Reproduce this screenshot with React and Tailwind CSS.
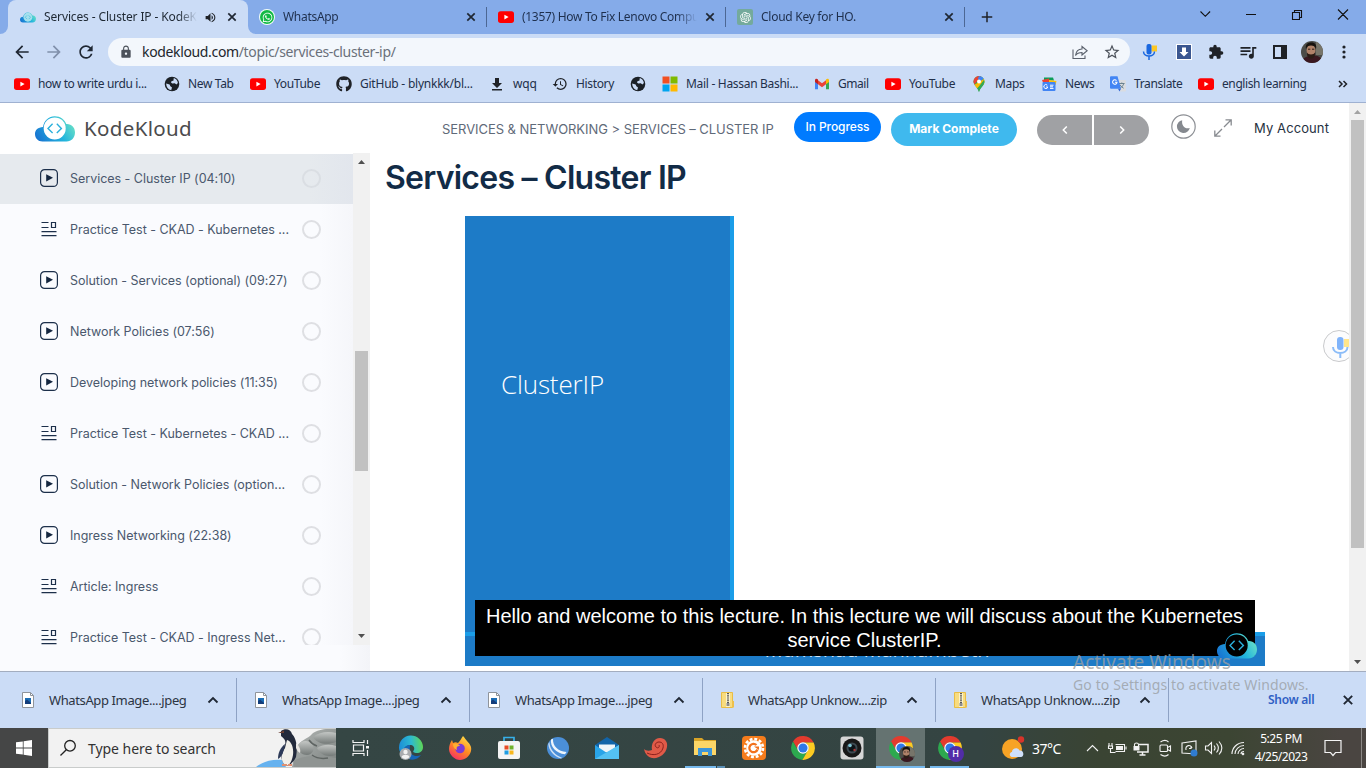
import React from "react";
import { FaGithub, FaWhatsapp } from "react-icons/fa";
import { RiOpenaiFill } from "react-icons/ri";
import {
  MdArrowBack, MdArrowForward, MdRefresh, MdLock, MdStarBorder, MdExtension,
  MdQueueMusic, MdHistory, MdVolumeUp, MdAdd,
} from "react-icons/md";

const CLOUD = "M7.500 25.500 C3 25.500 0 22.300 0 18 C0 13.800 3 11.200 8 10.900 C9 4.500 13.800 0.200 19.700 0.200 C25.500 0.200 29.800 3.600 31.300 8 C36.500 7.600 40 11.500 40 16.300 C40 21.800 36.500 25.500 31.500 25.500 Z";

function CloudLogo({ className, inner, id }) {
  return (
    <svg viewBox="0 0 40 26" className={className}>
      <defs>
        <linearGradient id={id} x1="0" y1="0.7" x2="1" y2="0.3">
          <stop offset="0" stopColor="#1977d2" />
          <stop offset="0.55" stopColor="#22b5dd" />
          <stop offset="1" stopColor="#6fe3c4" />
        </linearGradient>
      </defs>
      <path d={CLOUD} fill={`url(#${id})`} />
      <circle cx="19.7" cy="12.4" r="11" fill={inner} />
      <path d="M17.600 7.800 L13 12.400 L17.600 17 M21.800 7.800 L26.400 12.400 L21.800 17" fill="none" stroke="#2bb0dc" strokeWidth="1.400" />
    </svg>
  );
}

const YouTube = () => (
  <svg viewBox="0 0 16 16" className="size-4 shrink-0">
    <rect x="0" y="2.3" width="16" height="11.6" rx="2.6" fill="#f00" />
    <path d="M6.4 5.7 L10.6 8.1 L6.4 10.5Z" fill="#fff" />
  </svg>
);

const Globe = () => (
  <svg viewBox="0 0 16 16" className="size-4 shrink-0">
    <circle cx="8" cy="8" r="7.300" fill="#1b2026" />
    <path d="M2.200 7.600 5.600 8.400 6.400 10.200 8 11.400 7.200 14.200C4.300 13.800 2.200 11.200 2.200 7.600zM9.800 2.100C12 2.700 13.600 4.700 13.900 7L12.400 8.400 10.800 7.200 8.200 7.400 6.900 6.300 7.800 4.900 9.400 4.700z" fill="#cbdcf6" />
  </svg>
);

const Microsoft = () => (
  <svg viewBox="0 0 16 16" className="size-4 shrink-0">
    <path d="M.5.5h7v7h-7z" fill="#f25022" /><path d="M8.5.5h7v7h-7z" fill="#7fba00" />
    <path d="M.5 8.5h7v7h-7z" fill="#00a4ef" /><path d="M8.5 8.5h7v7h-7z" fill="#ffb900" />
  </svg>
);

const Gmail = () => (
  <svg viewBox="0 0 16 16" className="size-4 shrink-0">
    <path d="M1 4v9.2h3V6.5z" fill="#4285f4" /><path d="M15 4v9.2h-3V6.5z" fill="#34a853" />
    <path d="M4 4.2 8 7.3l4-3.1v4L8 11.2 4 8.2z" fill="#ea4335" />
    <path d="M1 4.2C1 2.8 2.6 2.2 4 3.4v4.8L1 6z" fill="#c5221f" /><path d="M15 4.2c0-1.4-1.600-2-3-.8v4.800L15 6z" fill="#fbbc04" />
  </svg>
);

const MapsPin = () => (
  <svg viewBox="0 0 16 16" className="size-4 shrink-0">
    <path d="M8 0a5.500 5.500 0 0 1 5.500 5.600C13.500 9.500 9.500 11 8 16 6.500 11 2.500 9.500 2.500 5.600A5.500 5.500 0 0 1 8 0z" fill="#34a853" />
    <path d="M2.500 5.600A5.500 5.500 0 0 1 8 0l2 .4-6.500 8.200A6 6 0 0 1 2.500 5.600z" fill="#ea4335" />
    <path d="M8 0a5.500 5.500 0 0 1 4.600 2.600L9.500 6 7 2.700z" fill="#4285f4" />
    <path d="M3.500 8.700 12.800 3c1 2 .8 4-.4 5.700L6 12.300z" fill="#fbbc04" />
    <path d="M6.300 12.500 12.900 4c1 2.500.2 4.300-1.500 6.200C9.500 12.200 8.800 13.500 8 16c-.4-1.500-1-2.500-1.700-3.500z" fill="#34a853" />
    <circle cx="8" cy="5.500" r="2" fill="#fff" />
  </svg>
);

const News = () => (
  <svg viewBox="0 0 16 16" className="size-4 shrink-0">
    <path d="M3 1.500h9l1 3H3z" fill="#0c9d58" /><path d="M1 4l7-1.500.8 4H2z" fill="#ea4335" />
    <path d="M8 4 15.500 5l-1 4H8z" fill="#ffc107" />
    <rect x="1.500" y="6" width="13" height="9" rx="1" fill="#4285f4" />
    <path d="M6.300 9.200A2 2 0 1 0 6.800 11H5M9 9.200h3.500M9 10.800h3M9 12.400h3.500" stroke="#fff" strokeWidth="1" fill="none" />
  </svg>
);

const Translate = () => (
  <svg viewBox="0 0 16 16" className="size-4 shrink-0">
    <path d="M6 4h9a1 1 0 0 1 1 1v9.500a1 1 0 0 1-1 1H10z" fill="#dadce0" />
    <path d="M9 7.500h5.500M11.800 6.500v1M13.800 7.500c-.6 2-1.800 3.500-3.500 4.500M10 8.800c.8 1.500 2 2.600 3.600 3.400" stroke="#607988" strokeWidth=".9" fill="none" />
    <path d="M1 .3h6.500L11 12.800H1a1 1 0 0 1-1-1V1.300a1 1 0 0 1 1-1z" fill="#4285f4" />
    <path d="M6.500 4.600A2.200 2.200 0 1 0 7 6.300H4.900" stroke="#fff" strokeWidth="1.100" fill="none" />
    <path d="M8 12.800h3l-1.500 2.700z" fill="#3367d6" />
  </svg>
);

const SaveIcon = () => (
  <svg viewBox="0 0 16 16" className="size-4 shrink-0">
    <path d="M6 2h4v5h3l-5 5-5-5h3zM3 13h10v1.500H3z" fill="#1f2227" />
  </svg>
);

const Close = ({ className = "size-4" }) => (
  <svg viewBox="0 0 16 16" className={className}>
    <path d="M4.300 4.300l7.400 7.400M11.700 4.300l-7.400 7.400" stroke="#1f2733" strokeWidth="1.700" />
  </svg>
);

const Chrome = ({ className }) => (
  <svg viewBox="0 0 24 24" className={className}>
    <path d="M2.770 6.010A11 11 0 0 1 21.800 7H12A5 5 0 0 0 7.670 14.500Z" fill="#e33b2e" />
    <path d="M2.770 6.010L7.670 14.500A5 5 0 0 0 16.330 14.500L11.430 22.980A11 11 0 0 1 2.770 6.010Z" fill="#2da94f" />
    <path d="M21.800 7A11 11 0 0 1 11.430 22.980L16.330 14.500A5 5 0 0 0 12 7Z" fill="#fdcb22" />
    <circle cx="12" cy="12" r="5.300" fill="#fff" />
    <circle cx="12" cy="12" r="4.200" fill="#2f78e8" />
  </svg>
);

const Face = ({ className }) => (
  <svg viewBox="0 0 22 22" className={className}>
    <defs><clipPath id="face"><circle cx="11" cy="11" r="11" /></clipPath></defs>
    <g clipPath="url(#face)">
      <path d="M0 0h22v22H0z" fill="#4b4c48" />
      <path d="M15 0h7v14h-7z" fill="#77756a" />
      <path d="M1 22c0-5 4-7 9-7 6-2 11 1 12 7z" fill="#3a1820" />
      <ellipse cx="10" cy="9.500" rx="4.400" ry="5.800" fill="#b08269" />
      <path d="M5 8C4 3 7 1.500 10.500 1.500S16 4 15 8c-1-2.500-2-3.500-5-3.500S6 5.500 5 8z" fill="#17130f" />
      <path d="M6 11.500c1 2.500 7 2.500 8 0 .3 4-1.500 6-4 6s-4.300-2-4-6z" fill="#2b1c15" />
      <path d="M7 8.200h2.300M11 8.200h2.300" stroke="#2b1c15" />
    </g>
  </svg>
);

/* ---------- browser chrome ---------- */

function TabRest({ icon, title, titleClass }) {
  return (
    <div className="flex h-[34px] w-[239px] items-center">
      <div className="w-[11px]" />
      {icon}
      <div className={"ml-2 w-[175px] overflow-hidden whitespace-nowrap text-[12px] text-[#1e2f4d] [mask-image:linear-gradient(to_right,black_88%,transparent)] " + titleClass}>{title}</div>
      <Close className="ml-[5px] size-4" />
      <div className="flex-1" />
      <div className="h-5 w-px bg-[#4c6794]" />
    </div>
  );
}

function TabStrip() {
  return (
    <div className="flex h-[34px] bg-[#cbdcf6]">
      <div className="w-2 rounded-br-lg bg-[#85abe9]" />
      <div className="w-[240px] bg-[#85abe9]">
        <div className="flex h-[34px] items-center rounded-t-lg bg-[#cbdcf6] pl-3">
          <CloudLogo className="h-[11px] w-4" inner="#a5e0ec" id="tabCloud" />
          <div className="ml-2 w-[153px] overflow-hidden whitespace-nowrap text-[12px] tracking-[-0.130px] text-[#1e2833] [mask-image:linear-gradient(to_right,black_88%,transparent)]">Services - Cluster IP - KodeKloud</div>
          <MdVolumeUp className="ml-[7px] size-[13px] text-[#1f2227]" />
          <Close className="ml-[7px] size-4" />
        </div>
      </div>
      <div className="flex flex-1 items-center rounded-bl-lg bg-[#85abe9]">
        <TabRest title="WhatsApp" titleClass="tracking-[-0.300px]" icon={
          <div className="flex size-4 items-center justify-center rounded-full bg-[#f3fff6]"><div className="flex size-[14px] items-center justify-center rounded-full bg-[#12b944]"><FaWhatsapp className="size-[11px] text-white" /></div></div>} />
        <TabRest title="(1357) How To Fix Lenovo Computer" titleClass="tracking-[-0.300px]" icon={<YouTube />} />
        <TabRest title="Cloud Key for HO." titleClass="tracking-[-0.270px]" icon={
          <div className="flex size-4 items-center justify-center rounded-[2px] bg-[#74aa9c]"><RiOpenaiFill className="size-[13px] text-white" /></div>} />
        <MdAdd className="ml-[13px] size-[18px] text-[#1f2227]" />
        <div className="flex-1" />
        <div className="flex h-[34px] w-[184px] items-start pt-[6px] text-black">
          <svg viewBox="0 0 184 16" className="h-4 w-[184px]" fill="none" stroke="#111" strokeWidth="1.100">
            <path d="M18.500 5.500l4.800 4.800 4.800-4.800M64 8.500h10M110.500 6.500h7v7h-7zM112.500 6.500v-2h7v7h-2M156 3.500l10 10M166 3.500l-10 10" />
          </svg>
        </div>
      </div>
    </div>
  );
}

function Toolbar() {
  return (
    <div className="flex h-[34px] items-center bg-[#cbdcf6] pt-px">
      <MdArrowBack className="ml-3 size-5 text-[#1f2733]" />
      <MdArrowForward className="ml-3 size-5 text-[#8090ab]" />
      <MdRefresh className="ml-[12px] size-5 text-[#1f2733]" />
      <div className="ml-3 flex h-7 w-[1022px] items-center rounded-full bg-[#f3f7fc] text-[14px] text-[#6a707a]">
        <MdLock className="ml-[11px] size-[14px] text-[#4c525b]" />
        <div className="ml-[9px] flex-1 whitespace-nowrap tracking-[-0.350px]"><span className="text-[#22262c]">kodekloud.com</span>/topic/services-cluster-ip/</div>
        <svg viewBox="0 0 16 16" className="mr-[15px] size-4" fill="none" stroke="#5a616c" strokeWidth="1.100">
          <path d="M1 5.500v9h12v-3M10 2.500 15.200 6.700 10 11V8.500C7 8.500 5 9.300 3.500 11.500 4 7.500 6 5 10 5z" />
        </svg>
        <MdStarBorder className="mr-[9px] size-[18px] text-[#4c525b]" />
      </div>
      <MicMark className="ml-3 h-4 w-4" />
      <svg viewBox="0 0 16 16" className="ml-[18px] size-4"><path d="M0 0h16v16H0z" fill="#fff" /><path d="M1 1h14v14H1z" fill="#3a5690" /><path d="M6 3.500h4V8h2.500L8 12.500 3.500 8H6z" fill="#fff" /></svg>
      <MdExtension className="ml-4 size-4 text-[#1f2227]" />
      <MdQueueMusic className="ml-[14px] size-5 text-[#1f2227]" />
      <svg viewBox="0 0 16 16" className="ml-[14px] size-4"><path d="M2 2h12v12H2z" fill="none" stroke="#1f2227" strokeWidth="2" /><path d="M9 2h5v12H9z" fill="#1f2227" /></svg>
      <Face className="ml-[13px] size-[22px]" />
      <svg viewBox="0 0 4 16" className="ml-[19px] h-4 w-1"><circle cx="2" cy="3" r="1.600" fill="#1f2227" /><circle cx="2" cy="8" r="1.600" fill="#1f2227" /><circle cx="2" cy="13" r="1.600" fill="#1f2227" /></svg>
    </div>
  );
}

function MicMark({ className }) {
  return (
    <svg viewBox="0 0 16 16" className={className}>
      <path d="M9.500 1.500H15v6H9.500z" fill="#fcc724" />
      <rect x="4.500" y="0" width="5" height="10.500" rx="2" fill="#1967e0" />
      <path d="M1.500 7.500c0 6 11 6 11 0M7 12v4" stroke="#1967e0" strokeWidth="1.500" fill="none" />
    </svg>
  );
}

const bookmarks = [
  [<YouTube />, "how to write urdu i...", "w-[150px] tracking-[-0.340px]"],
  [<Globe />, "New Tab", "w-[86px] tracking-[-0.350px]"],
  [<YouTube />, "YouTube", "w-[86px] tracking-[-0.350px]"],
  [<FaGithub className="size-4 shrink-0 text-[#1f2227]" />, "GitHub - blynkkk/bl...", "w-[153px] tracking-[-0.230px]"],
  [<SaveIcon />, "wqq", "w-[63px] tracking-[-0.150px]"],
  [<MdHistory className="size-4 shrink-0 text-[#1f2227]" />, "History", "w-[78px] tracking-[-0.350px]"],
  [<Globe />, "", "w-[32px]"],
  [<Microsoft />, "Mail - Hassan Bashi...", "w-[152px] tracking-[-0.300px]"],
  [<Gmail />, "Gmail", "w-[71px] tracking-[-0.450px]"],
  [<YouTube />, "YouTube", "w-[86px] tracking-[-0.350px]"],
  [<MapsPin />, "Maps", "w-[70px] tracking-[-0.350px]"],
  [<News />, "News", "w-[69px] tracking-[-0.350px]"],
  [<Translate />, "Translate", "w-[88px] tracking-[-0.350px]"],
  [<YouTube />, "english learning", "w-[140px] tracking-[-0.400px]"],
];

function Bookmarks() {
  return (
    <div className="flex h-[35px] items-center border-b border-[#9fb1d1] bg-[#cbdcf6] pb-[2px] pl-[14px] text-[12px] text-[#22304a]">
      {bookmarks.map(([icon, label, cls], i) => (
        <div key={i} className={"flex shrink-0 items-center gap-2 whitespace-nowrap " + cls}>{icon}<span>{label}</span></div>
      ))}
      <svg viewBox="0 0 10 8" className="h-2 w-[10px]" fill="none" stroke="#1f2227" strokeWidth="1.500"><path d="M1 1l3 3-3 3M5.500 1l3 3-3 3" /></svg>
    </div>
  );
}

/* ---------- course page ---------- */

const PlayIcon = () => (
  <svg viewBox="0 0 18 18" className="-mt-[2px] size-[18px]">
    <rect x=".6" y=".6" width="16.800" height="16.800" rx="4" fill="none" stroke="#1c2f4a" strokeWidth="1.200" />
    <path d="M6.200 5.200 13 8.800l-6.800 3.600z" fill="#14263f" />
  </svg>
);
const TestIcon = () => (
  <svg viewBox="0 0 18 18" className="-mt-[2px] size-[18px]" fill="none" stroke="#1c2f4a" strokeWidth="1.200">
    <path d="M1.500 2.500h7M1.500 7.500h7M1.500 11.600h15M1.500 15.600h15M11.500 2.500h4v5h-4z" />
  </svg>
);

const lessons = [
  ["play", "Services - Cluster IP (04:10)"],
  ["test", "Practice Test - CKAD - Kubernetes ..."],
  ["play", "Solution - Services (optional) (09:27)"],
  ["play", "Network Policies (07:56)"],
  ["play", "Developing network policies (11:35)"],
  ["test", "Practice Test - Kubernetes - CKAD ..."],
  ["play", "Solution - Network Policies (option..."],
  ["play", "Ingress Networking (22:38)"],
  ["test", "Article: Ingress"],
  ["test", "Practice Test - CKAD - Ingress Net..."],
];

function Sidebar() {
  return (
    <aside className="h-[518px] w-[370px] shrink-0 bg-[linear-gradient(to_right,#fafbfe_340px,#f3f4f8)]">
      <div className="flex h-[492px]">
        <div className="w-[353px] overflow-hidden bg-[linear-gradient(to_right,#fafbfe_320px,#f5f6fa)] font-[Inter,sans-serif] text-[12.500px] tracking-[-0.020px] text-[#4a586d]">
          {lessons.map(([kind, title], i) => (
            <div key={title} className={(i === 0 ? "border-t border-white bg-[linear-gradient(to_right,#e6eaee_310px,#e2e6ed)] bg-clip-padding" : "pt-px") + " flex h-[51px] items-center pl-10"}>
              {kind === "play" ? <PlayIcon /> : <TestIcon />}
              <div className="ml-3 w-[232px] whitespace-nowrap">{title}</div>
              <div className={(i === 0 ? "border-[#dadee3]" : "border-[#dedfe3]") + " -mt-[2px] size-[19px] rounded-full border-2"} />
            </div>
          ))}
        </div>
        <div className="flex w-[17px] flex-col items-center bg-[#f1f1f1]">
          <svg viewBox="0 0 7 4" className="mt-[7px] h-1 w-[7px]"><path d="M0 4 3.500 0 7 4z" fill="#505050" /></svg>
          <div className="mt-[187px] h-[120px] w-[13px] bg-[#c1c1c1]" />
          <div className="flex-1" />
          <svg viewBox="0 0 7 4" className="mb-[7px] h-1 w-[7px]"><path d="M0 0 3.500 4 7 0z" fill="#505050" /></svg>
        </div>
      </div>
    </aside>
  );
}

function Header() {
  return (
    <header className="flex h-[50px] items-start bg-white font-[Inter,sans-serif]">
      <CloudLogo className="ml-[35px] mt-[13px] h-[26px] w-10" inner="#fff" id="headCloud" />
      <div className="ml-[9px] mt-[12px] w-[348px] font-['Noto_Sans',sans-serif] text-[20.500px] leading-[27px] tracking-[0.350px] text-[#4b4b4d]">KodeKloud</div>
      <div className="ml-[10px] mt-[16px] w-[352px] whitespace-nowrap text-[13px] leading-[20px] tracking-[-0.050px] text-[#5f6a79]">SERVICES &amp; NETWORKING &gt; SERVICES – CLUSTER IP</div>
      <div className="mt-[9px] flex h-[30px] w-[87px] items-center justify-center rounded-full bg-[#007bff] text-[12px] font-medium tracking-[-0.100px] text-white">In Progress</div>
      <div className="ml-[10px] mt-[10px] flex h-[33px] w-[126px] items-center justify-center rounded-full bg-[#3fb9ee] pb-px text-[12px] font-bold text-white">Mark Complete</div>
      <div className="ml-5 mt-3 flex gap-[2px]">
        <div className="flex h-[30px] w-[55px] items-center justify-center rounded-l-full bg-[#a0a1a4]"><svg viewBox="0 0 6 8" className="h-2 w-[6px]" fill="none" stroke="#fff" strokeWidth="1.500"><path d="M4.800.5 1.300 4l3.500 3.500" /></svg></div>
        <div className="flex h-[30px] w-[55px] items-center justify-center rounded-r-full bg-[#a0a1a4]"><svg viewBox="0 0 6 8" className="h-2 w-[6px]" fill="none" stroke="#fff" strokeWidth="1.500"><path d="M1.200.5 4.700 4 1.200 7.500" /></svg></div>
      </div>
      <svg viewBox="0 0 25 25" className="ml-[22px] mt-[11px] size-[25px]"><circle cx="12.500" cy="12.500" r="11.700" fill="none" stroke="#8d9095" strokeWidth="1.200" /><path d="M11.200 6.200A6.500 6.500 0 1 0 18.800 14C14 15.500 10.300 11.500 11.200 6.200z" fill="#85898f" /></svg>
      <svg viewBox="0 0 18 18" className="ml-[18px] mt-[16px] size-[18px]" fill="none" stroke="#888b90" strokeWidth="1.300"><path d="M11.500.8h5.700v5.700M17 1l-7 7M.8 11.500v5.700h5.700M1 17l7-7" /></svg>
      <div className="ml-[22px] mt-[15px] whitespace-nowrap text-[13px] leading-[20px] tracking-[0.100px] text-[#26313f]">My Account</div>
    </header>
  );
}

function Video() {
  return (
    <div className="relative ml-[95px] mt-5 h-[450px] w-[800px] bg-white">
      <div className="flex h-[416px] w-[269px] border-r-4 border-[#1a9de8] bg-[#1d7bc7]">
        <div className="ml-[36px] mt-[151px] font-['Open_Sans',sans-serif] text-[26px] font-light leading-[34px] tracking-[-0.150px] text-white">ClusterIP</div>
      </div>
      <div className="h-1 bg-[#1a9de8]" />
      <div className="flex h-[30px] items-start justify-center overflow-hidden bg-[#1d7bc7]">
        <div className="ml-[24px] whitespace-nowrap font-['Open_Sans',sans-serif] text-[20px] leading-[28px] text-[#d4e8f8]">Mumshad Mannambeth</div>
      </div>
      <div className="absolute left-[10px] top-[384px] h-14 w-[780px] bg-black pr-px pt-1 text-center font-['Liberation_Sans',sans-serif] text-[20px] leading-6 text-white">
        Hello and welcome to this lecture. In this lecture we will discuss about the Kubernetes<br />service ClusterIP.
      </div>
      <CloudLogo className="absolute left-[752px] top-[417px] h-[26px] w-10" inner="#000" id="vidCloud" />
    </div>
  );
}

function Page() {
  return (
    <div className="flex h-[568px] bg-white">
      <div className="relative w-[1349px] overflow-hidden">
        <Header />
        <div className="flex">
          <Sidebar />
          <main className="flex-1">
            <h1 className="ml-[15px] mt-[7px] whitespace-nowrap font-[Inter,sans-serif] text-[32px] font-semibold leading-[36px] tracking-[-0.750px] text-[#122b46]">Services – Cluster IP</h1>
            <Video />
          </main>
        </div>
        <div className="absolute left-[1323px] top-[227px] size-8 rounded-full border border-[#c9cacc] bg-[#fcfcfd] pl-[7px] pt-[5px]">
          <svg viewBox="0 0 20 22" className="h-[22px] w-5">
            <path d="M13 3h6v8h-6z" fill="#ffe58a" /><rect x="6" y="1" width="6.500" height="13" rx="3" fill="#7fb3fa" />
            <path d="M2 11c0 8 14.500 8 14.500 0M9.300 17v5" stroke="#8bbcf8" strokeWidth="2" fill="none" />
          </svg>
        </div>
      </div>
      <div className="flex w-[17px] flex-col items-center bg-[#f1f1f1]">
        <svg viewBox="0 0 7 4" className="mt-[7px] h-1 w-[7px]"><path d="M0 4 3.500 0 7 4z" fill="#a3a3a3" /></svg>
        <div className="mt-[6px] h-[428px] w-[13px] bg-[#c1c1c1]" />
        <div className="flex-1" />
        <svg viewBox="0 0 7 4" className="mb-[7px] h-1 w-[7px]"><path d="M0 0 3.500 4 7 0z" fill="#505050" /></svg>
      </div>
    </div>
  );
}

/* ---------- downloads shelf ---------- */

const JpegIcon = () => (
  <svg viewBox="0 0 12 16" className="h-4 w-3"><path d="M.5.5h8l3 3v12H.5z" fill="#fff" stroke="#8f949b" /><path d="M8.500.5v3h3" fill="none" stroke="#8f949b" /><path d="M3 6h6v6H3z" fill="#1b6db5" /><path d="M3 9l2-1.500L9 11v1H3z" fill="#143d7a" /></svg>
);
const ZipIcon = () => (
  <svg viewBox="0 0 13 16" className="h-4 w-[13px]"><path d="M.5.5h11v15H.5z" fill="#f8dc80" stroke="#e9bd45" /><path d="M5 1h4v14H5z" fill="#fdf3c8" /><path d="M7 1v10" stroke="#55565a" strokeWidth="2" strokeDasharray="1.200 1" /><path d="M11 9h2v6.500h-2z" fill="#edc04c" /><path d="M5.500 11h3v3h-3z" fill="#8d8d8d" /></svg>
);
const ChevUp = () => (
  <svg viewBox="0 0 12 8" className="h-2 w-3" fill="none" stroke="#1f2733" strokeWidth="1.800"><path d="M1.500 6.500 6 2l4.500 4.500" /></svg>
);

const files = ["WhatsApp Image....jpeg", "WhatsApp Image....jpeg", "WhatsApp Image....jpeg", "WhatsApp Unknow....zip", "WhatsApp Unknow....zip"];

function Downloads() {
  return (
    <div className="flex h-[57px] items-center border-t border-[#a3adbf] bg-[#cbdcf6] pl-1 text-[13px] text-[#2b3442]">
      {files.map((f, i) => (
        <div key={i} className="flex h-11 w-[233px] shrink-0 items-center border-r border-[#8ea2c4] pl-[18px]">
          <div className="w-[27px] pb-px">{f.endsWith("zip") ? <ZipIcon /> : <JpegIcon />}</div>
          <div className="w-[158px] whitespace-nowrap pt-px tracking-[-0.380px]">{f}</div>
          <ChevUp />
        </div>
      ))}
      <div className="ml-[99px] w-[71px] whitespace-nowrap text-[12px] font-semibold tracking-[-0.250px] text-[#2f5fc4]">Show all</div>
      <Close className="-mt-px size-[18px]" />
    </div>
  );
}

/* ---------- taskbar ---------- */

const Slot = ({ children, className = "" }) => (
  <div className={"flex h-10 w-[49px] shrink-0 items-center justify-center " + className}>{children}</div>
);

const Edge = () => (
  <svg viewBox="0 0 26 26" className="size-[26px]">
    <defs><linearGradient id="edgeG" x1="0" y1="0.300" x2="1" y2="0.200"><stop offset="0" stopColor="#1c8fd8" /><stop offset=".5" stopColor="#2dbad0" /><stop offset="1" stopColor="#62d94e" /></linearGradient></defs>
    <path d="M1 13A12 12 0 0 1 25 12c0 4-3 6-6 6s-5-1-3-3c1-3-1-5-4-5-5 0-8 5-6 11C3 19 1 16 1 13z" fill="url(#edgeG)" />
    <path d="M12 10c-6 0-9 6-5 11 4 5 12 5 16-1-4 2-10 1-11-4-.5-3 0-5 0-6z" fill="#1566b8" />
    <circle cx="7.500" cy="19" r="6" fill="#a9abae" /><circle cx="7.500" cy="17" r="2.200" fill="#f1f1f1" /><path d="M3.500 22c1-3 7-3 8 0-2 2.500-6 2.500-8 0z" fill="#f1f1f1" />
  </svg>
);
const Firefox = () => (
  <svg viewBox="0 0 26 26" className="size-[26px]">
    <defs><linearGradient id="ffG" x1=".8" y1="0" x2=".2" y2="1"><stop offset="0" stopColor="#ffe14a" /><stop offset=".5" stopColor="#ff8a22" /><stop offset="1" stopColor="#f5286a" /></linearGradient></defs>
    <path d="M16 1c2 2 3 4 4 5 3 3 5 6 4 10-1 5-6 9-11 9S2 20 2 14c0-3 1-6 3-9l1 3c2-1 3-1 5 0 2-2 3-4 5-7z" fill="url(#ffG)" />
    <circle cx="13" cy="13.500" r="4.800" fill="#7b3ad6" /><path d="M6 9c3-1 6 0 7 2-3 0-4 1-3 4-3-1-4-4-4-6z" fill="#ffb02e" />
  </svg>
);
const Store = () => (
  <svg viewBox="0 0 24 26" className="h-[26px] w-6">
    <path d="M7 7V2.500h10V7" fill="none" stroke="#37b0e8" strokeWidth="1.700" /><rect x="1" y="6" width="22" height="18" rx="2" fill="#f4f4f4" />
    <path d="M7.500 10.500h4v4h-4z" fill="#e74b25" /><path d="M12.500 10.500h4v4h-4z" fill="#6fb22c" /><path d="M7.500 15.500h4v4h-4z" fill="#1f9de3" /><path d="M12.500 15.500h4v4h-4z" fill="#f8b71c" />
  </svg>
);
const BlueBall = () => (
  <svg viewBox="0 0 24 24" className="size-6">
    <circle cx="12" cy="12" r="11" fill="#4b8fd8" />
    <path d="M5 3.500c-1 7 5 14 14 14.700l1.500-2.200C12 15.500 6.500 10 7 2.800z" fill="#eef5fc" />
    <path d="M2.300 8c.7 7 5.700 12.300 12.500 14.500l1.500-.6C9.500 19.500 4 14 3.300 6z" fill="#cfe2f6" />
  </svg>
);
const Mail = () => (
  <svg viewBox="0 0 24 24" className="size-6"><path d="M0 9 12 1l12 8v3H0z" fill="#1264a8" /><path d="M4 8.500h16v8H4z" fill="#eef4f8" /><path d="M0 9l12 8 12-8v14H0z" fill="#29a4e8" /><path d="M0 23 24 9v14z" fill="#54c1f2" /></svg>
);
const Shell = () => (
  <svg viewBox="0 0 24 22" className="h-[22px] w-6"><path d="M0 12c2 2 5 2 8 1-1-6 2-12 8-12 5 0 8 4 7 9-1 7-8 12-15 11-4-1-7-4-8-9z" fill="#e05a48" /><path d="M3 16c6 3 14 2 16-5 1-4-1-6-4-6s-5 3-3 5 4 0 3-2" fill="none" stroke="#8d201c" strokeWidth="1" /></svg>
);
const Explorer = () => (
  <svg viewBox="0 0 22 20" className="h-5 w-[22px]"><path d="M0 1h8l2 2h12v4H0z" fill="#d9a427" /><path d="M0 4h22v14H0z" fill="#fcd667" /><path d="M4 11h14v8h-4v-4H8v4H4z" fill="#3d96d8" /></svg>
);
const Orange = () => (
  <svg viewBox="0 0 24 24" className="size-6"><rect width="24" height="24" rx="4" fill="#f57c1c" /><circle cx="12" cy="12" r="9" fill="none" stroke="#fff" strokeWidth="2.600" strokeDasharray="2.900 1.812" /><circle cx="12" cy="12" r="7.800" fill="#fff" /><path d="M14.500 9a4.200 4.200 0 1 0 1 4.500" fill="none" stroke="#f2711c" strokeWidth="2.200" /><path d="M12 10.500h5v3.500z" fill="#f2711c" /></svg>
);
const Camera = () => (
  <svg viewBox="0 0 24 24" className="size-6"><rect x=".5" y=".5" width="23" height="23" rx="3" fill="#d6d6d6" /><circle cx="12" cy="12" r="9.500" fill="#181818" /><circle cx="12" cy="12" r="5.500" fill="#3d4a52" /><circle cx="12" cy="12" r="3.500" fill="#0d1418" /><circle cx="10" cy="9.500" r="1.800" fill="#7fc6d6" /><circle cx="14.500" cy="14" r="1.200" fill="#a33" /></svg>
);

const Penguin = () => (
  <svg viewBox="0 0 80 38" className="h-[38px] w-20">
    <defs>
      <linearGradient id="rock" x1="0" y1="0" x2="1" y2="1"><stop offset="0" stopColor="#b4b8b6" /><stop offset="1" stopColor="#7c8280" /></linearGradient>
      <linearGradient id="stone" x1="0" y1="0" x2="0" y2="1"><stop offset="0" stopColor="#c3c6c4" /><stop offset="1" stopColor="#747a78" /></linearGradient>
    </defs>
    <path d="M36 38 40 20C43 11 52 10 56 5c4-4 14-6 24-5v38z" fill="url(#rock)" />
    <path d="M42 16c4-5 10-5 14-1 4 5 0 11-5 11-6 0-10-5-9-10z" fill="url(#stone)" />
    <path d="M57 8c6-5 15-6 23-4v9c-8 3-18 3-23-5z" fill="url(#stone)" />
    <path d="M61 19c6-4 13-4 19-2v9c-8 2-15 1-19-7z" fill="url(#stone)" />
    <path d="M38 32c8-6 26-6 42-3v9H38z" fill="#8f9492" />
    <path d="M56 26c4 3 10 4 16 3M53 11c2 3 5 5 8 6" stroke="#5f6563" strokeWidth="1.500" fill="none" />
    <path d="M0 38c6-5 16-8 26-7l4 7z" fill="#66b2ef" />
    <path d="M25 2c4-3 10-2 11 3 4 4 6 12 4 23-2 5-7 9-10 9-6-5-6-14-1-21 1-4 0-6-4-9z" fill="#232a3c" />
    <path d="M31 11c4 1 7 7 6 15-1 6-3 10-7 11-6-5-5-12-1-18z" fill="#f1efe9" />
    <path d="M22 4l6-2.500v2.500z" fill="#6b4035" /><path d="M29 15c-5 4-7 9-7 15 4-2 6-8 7-15z" fill="#2d3a58" />
    <path d="M40 14c3 3 5 6 4 10-2-1-3-3-4-5z" fill="#e9e6e2" /><path d="M26 36h5M32 36h4" stroke="#e08f70" strokeWidth="2" />
  </svg>
);

const Bell = () => (
  <svg viewBox="0 0 18 18" className="size-[18px]" fill="none" stroke="#f4f4f4" strokeWidth="1.200"><path d="M1 1.500h16v12h-5.500L9 16.500l-2.500-3H1z" /></svg>
);

function Tray() {
  return (
    <svg viewBox="0 0 164 20" className="h-5 w-[164px]" fill="none" stroke="#f2f2f2" strokeWidth="1.100">
      <path d="M1 13 6.500 7.500 12 13" />
      <path d="M29.500 6.500h9v7h-9M40 8.500v3" /><path d="M30 8h7v4h-7z" fill="#f2f2f2" stroke="none" /><path d="M23 5v3M26 5v3M22.500 8h4v2.500h-4zM24.500 10.500v4h5" />
      <path d="M53 6.500h9v7.500H51M56.500 14v3M53.500 17h6" strokeWidth="1.500" /><rect x="47.500" y="8" width="6" height="4.500" fill="#f2f2f2" stroke="none" /><path d="M48.500 8V6.500c0-2 4-2 4 0V8" />
      <rect x="74" y="7" width="7.500" height="6.500" rx="1" /><path d="M81.500 9.500l3-1.500v5l-3-1.500M74.500 4c3-2 6-2 8 0M74.500 16.500c3 2 6 2 8 0" />
      <path d="M96 5l14-2v13l-14-1z" /><path d="M100 12c-1-5 5-6 6-2M105 8v2.500h-2" /><circle cx="108" cy="15" r="3.500" fill="#2f7cd0" stroke="none" />
      <path d="M119.500 8h2.500l3.500-3.500v11L122 12h-2.500zM128 7.500c1.300 1.500 1.300 3.500 0 5M130.500 5.500c2.500 3 2.500 6 0 9M133 3.500c3.500 4 3.500 9 0 13" />
      <path d="M146 16C146 10 151 4.500 158 4.500M149 16c0-4.500 4-8.500 9-8.500M152 16c0-3 3-5.500 6-5.500M155 16c0-1.500 1.500-2.500 3-2.500" /><circle cx="157" cy="16" r=".8" fill="#fff" />
    </svg>
  );
}

function Taskbar() {
  return (
    <div className="flex h-10 bg-[linear-gradient(to_right,#454646_0px,#454646_60px,#354644_330px,#344442_980px,#3a4433_1100px,#3c4533_1230px,#4a4541_1340px)] text-white">
      <div className="flex w-12 items-center justify-center">
        <svg viewBox="0 0 16 16" className="size-4"><path d="M0 2.300 6.800 1.400v6.200H0zM7.600 1.200 16 0v7.600H7.600zM0 8.400h6.800v6.200L0 13.700zM7.600 8.400H16V16l-8.400-1.200z" fill="#fff" /></svg>
      </div>
      <div className="flex h-10 w-[288px] items-center border-y border-l border-[#c9cccb] bg-[#f2f2f2]">
        <svg viewBox="0 0 18 18" className="ml-[10px] size-[18px]" fill="none" stroke="#222" strokeWidth="1.300"><circle cx="11" cy="6.800" r="5.300" /><path d="M7.300 10.700 1.500 16.500" /></svg>
        <div className="ml-[11px] w-[168px] whitespace-nowrap text-[14px] tracking-[-0.050px] text-[#333]">Type here to search</div>
        <Penguin />
      </div>
      <Slot><svg viewBox="0 0 18 18" className="size-[18px]" fill="none" stroke="#f4f4f4" strokeWidth="1.200"><path d="M1 1v2.500h11V1M1 17v-2.500h11V17M1.500 6h10v6h-10zM15.500 1v4M15.500 11v6" /><path d="M14 7h3v2.500h-3z" fill="#f4f4f4" stroke="none" /></svg></Slot>
      <div className="w-px" />
      <Slot><Edge /></Slot>
      <Slot><Firefox /></Slot>
      <Slot><Store /></Slot>
      <Slot><BlueBall /></Slot>
      <Slot><Mail /></Slot>
      <Slot><Shell /></Slot>
      <Slot className="flex-col">
        <div className="flex h-[38px] items-center"><Explorer /></div>
        <div className="flex h-[2px] w-10 gap-px"><div className="w-[31px] bg-[#76b9ed]" /><div className="w-2 bg-[#5a8fb5]" /></div>
      </Slot>
      <Slot><Orange /></Slot>
      <Slot><Chrome className="size-[26px]" /></Slot>
      <Slot><Camera /></Slot>
      <Slot className="border-b-2 border-[#76b9ed] bg-[#657371]"><div className="relative mt-[2px] size-[26px]"><Chrome className="size-[26px]" /><Face className="absolute left-[11px] top-[11px] size-4" /></div></Slot>
      <Slot className="flex-col">
        <div className="flex h-[38px] items-center"><div className="relative mt-[2px] size-[26px]"><Chrome className="size-[26px]" /><div className="absolute left-[11px] top-[11px] flex size-4 items-center justify-center rounded-full bg-[#512da8] font-['Noto_Sans',sans-serif] text-[9px] font-medium text-white">H</div></div></div>
        <div className="h-[2px] w-[39px] bg-[#76b9ed]" />
      </Slot>
      <div className="flex flex-1 items-center">
        <svg viewBox="0 0 24 24" className="ml-[27px] size-6"><circle cx="11" cy="13" r="10" fill="#f7a325" /><circle cx="20" cy="3.500" r="3.200" fill="#d8342a" /><path d="M11 21c-3-.5-3-4.500 0-5 0-4 6-5 7.500-1.500 4-1 5.500 5.500 1.500 6.500z" fill="#cfe0fa" /></svg>
        <div className="ml-[7px] w-[54px] whitespace-nowrap text-[14px] tracking-[-0.500px]">37°C</div>
        <Tray />
        <div className="ml-[1px] w-[60px] whitespace-nowrap text-center text-[12px] leading-[18px] tracking-[-0.480px]"><div>5:25 PM</div><div>4/25/2023</div></div>
        <div className="ml-[13px]"><Bell /></div>
        <div className="flex-1" />
        <div className="mr-1 h-10 w-px bg-[#8b8885]" />
      </div>
    </div>
  );
}

export default function App() {
  return (
    <div className="relative h-[768px] w-[1366px] overflow-hidden bg-white font-['Noto_Sans',sans-serif]">
      <TabStrip />
      <Toolbar />
      <Bookmarks />
      <Page />
      <Downloads />
      <Taskbar />
      <div className="absolute left-[1073px] top-[649px] whitespace-nowrap text-[#9a9fa4]/80">
        <div className="text-[19px] leading-[27px] tracking-[0.050px]">Activate Windows</div>
        <div className="text-[14px] leading-[18px] tracking-[0.110px]">Go to Settings to activate Windows.</div>
      </div>
    </div>
  );
}
